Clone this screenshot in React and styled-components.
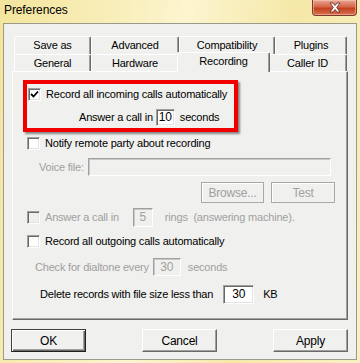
import React from "react";
import styled, { createGlobalStyle } from "styled-components";

const GlobalStyle = createGlobalStyle`
  html, body {
    margin: 0;
    padding: 0;
  }
  body {
    font-family: "Liberation Sans", Arial, sans-serif;
    font-size: 11px;
    letter-spacing: -0.2px;
    color: #000;
  }
`;

const Window = styled.div`
  width: 360px;
  height: 363px;
  box-sizing: border-box;
  padding: 0 3px 3px 3px;
  display: flex;
  flex-direction: column;
  background: linear-gradient(100deg, #f3e59c 0%, #f9efbd 30%, #fcf5cf 45%, #f5e8a8 70%, #faf1c3 100%);
`;

const TitleBar = styled.div`
  height: 23px;
  display: flex;
  align-items: flex-start;
  justify-content: space-between;
`;

const Title = styled.span`
  margin: 3px 0 0 1px;
  font-size: 12px;
  letter-spacing: -0.1px;
  color: #000;
`;

const CloseButton = styled.div`
  width: 45px;
  height: 16px;
  box-sizing: border-box;
  border: 1px solid #7a3b2c;
  border-top: none;
  border-radius: 0 0 4px 4px;
  background: linear-gradient(180deg, #e8a693 0%, #d6664a 45%, #c4401f 55%, #d7704e 100%);
  box-shadow: inset 0 0 0 1px rgba(255, 210, 190, 0.5);
  display: flex;
  align-items: center;
  justify-content: center;
`;

const Client = styled.div`
  flex: 1;
  box-sizing: border-box;
  border: 1px solid #9a9a8c;
  background: #f0f0ee;
  display: flex;
  flex-direction: column;
  padding-top: 12px;
`;

const TabRow = styled.div`
  display: flex;
  margin-left: 10px;
  height: ${(p) => p.$h}px;
`;

const Tab = styled.div`
  position: relative;
  z-index: ${(p) => (p.$selected ? 2 : 1)};
  box-sizing: border-box;
  width: ${(p) => (p.$selected ? p.$w + 4 : p.$w)}px;
  height: ${(p) => (p.$selected ? p.$h + 3 : p.$h)}px;
  margin: ${(p) => (p.$selected ? "-2px -2px 0 -2px" : "0")};
  background: #f0f0ee;
  border-top: 1px solid #fff;
  border-left: 1px solid #fff;
  border-right: 1px solid #696969;
  box-shadow: inset -1px 0 #a0a0a0;
  border-radius: 2px 2px 0 0;
  display: flex;
  justify-content: center;
  padding-top: ${(p) => (p.$selected ? 2 : 2)}px;
`;

const Panel = styled.div`
  position: relative;
  z-index: 1;
  margin-left: 8px;
  width: 336px;
  height: 249px;
  box-sizing: border-box;
  border-top: 1px solid #fff;
  border-left: 1px solid #fff;
  border-right: 1px solid #696969;
  border-bottom: 1px solid #696969;
  box-shadow: inset -1px -1px #a0a0a0;
  display: flex;
  flex-direction: column;
  padding-left: 14px;
`;

const Highlight = styled.div`
  width: 215px;
  height: 52px;
  box-sizing: border-box;
  margin: 8px 0 0 -4px;
  border: 4px solid #f20000;
  box-shadow: 2px 2px 2px rgba(0, 0, 0, 0.45);
  display: flex;
  flex-direction: column;
  padding-left: 1px;
`;

const Row = styled.div`
  display: flex;
  align-items: center;
  height: ${(p) => p.$h || 20}px;
  margin-top: ${(p) => p.$mt || 0}px;
  padding-left: ${(p) => p.$pl || 0}px;
  color: ${(p) => (p.$disabled ? "#a0a0a0" : "#000")};
`;

const Check = styled.span`
  width: 13px;
  height: 13px;
  box-sizing: border-box;
  flex: none;
  margin-right: 5px;
  border-top: 1px solid #a0a0a0;
  border-left: 1px solid #a0a0a0;
  border-right: 1px solid #fff;
  border-bottom: 1px solid #fff;
  box-shadow: inset 1px 1px #696969, inset -1px -1px #e3e3e3;
  background: ${(p) => (p.$disabled ? "#f0f0ee" : "#fff")};
  display: flex;
  align-items: center;
  justify-content: center;
`;

const Field = styled.span`
  width: ${(p) => p.$w}px;
  height: ${(p) => p.$h || 18}px;
  box-sizing: border-box;
  flex: none;
  margin: 0 ${(p) => p.$mr || 0}px 0 ${(p) => p.$ml || 0}px;
  border-top: 1px solid #a0a0a0;
  border-left: 1px solid #a0a0a0;
  border-right: 1px solid #fff;
  border-bottom: 1px solid #fff;
  box-shadow: ${(p) => (p.$disabled ? "inset 1px 1px #c8c8c8" : "inset 1px 1px #696969, inset -1px -1px #e3e3e3")};
  background: ${(p) => (p.$disabled ? "#f0f0ee" : "#fff")};
  color: ${(p) => (p.$disabled ? "#a0a0a0" : "#000")};
  display: flex;
  align-items: center;
  justify-content: center;
  font-size: 12px;
`;

const ButtonRow = styled.div`
  display: flex;
  justify-content: flex-end;
  gap: 7px;
  margin-top: 5px;
  padding-right: 12px;
`;

const SmallButton = styled.div`
  width: ${(p) => p.$w}px;
  height: 21px;
  box-sizing: border-box;
  border: 1px solid #a8a8a8;
  box-shadow: inset 1px 1px #fff;
  color: #a0a0a0;
  display: flex;
  align-items: center;
  justify-content: center;
  font-size: 12px;
`;

const Footer = styled.div`
  display: flex;
  justify-content: space-between;
  margin-top: 9px;
  padding: 0 8px 0 7px;
`;

const DialogButton = styled.div`
  width: 75px;
  height: 23px;
  box-sizing: border-box;
  border-top: 1px solid ${(p) => (p.$default ? "#404040" : "#fff")};
  border-left: 1px solid ${(p) => (p.$default ? "#404040" : "#fff")};
  border-right: 1px solid ${(p) => (p.$default ? "#202020" : "#696969")};
  border-bottom: 1px solid ${(p) => (p.$default ? "#202020" : "#696969")};
  box-shadow: ${(p) =>
    p.$default
      ? "inset 1px 1px #fff, inset -1px -1px #696969, inset -2px -2px #a0a0a0"
      : "inset -1px -1px #a0a0a0"};
  display: flex;
  align-items: center;
  justify-content: center;
  font-size: 12px;
`;

const CheckMark = () => (
  <svg width="9" height="9" viewBox="0 0 9 9">
    <path d="M1 4 L3.5 6.5 L8 1.5" fill="none" stroke="#000" strokeWidth="1.8" />
  </svg>
);

const CloseGlyph = () => (
  <svg width="14" height="11" viewBox="0 0 14 11">
    <path
      d="M2 1 L5 1 L7 3.5 L9 1 L12 1 L8.7 5.5 L12 10 L9 10 L7 7.5 L5 10 L2 10 L5.3 5.5 Z"
      fill="#fff"
      stroke="#5a2a20"
      strokeWidth="0.8"
    />
  </svg>
);

const backTabs = [
  { label: "Save as", w: 77 },
  { label: "Advanced", w: 88 },
  { label: "Compatibility", w: 96 },
  { label: "Plugins", w: 72 },
];

const frontTabs = [
  { label: "General", w: 77 },
  { label: "Hardware", w: 88 },
  { label: "Recording", w: 89, selected: true },
  { label: "Caller ID", w: 79 },
];

const App = () => (
  <Window>
    <GlobalStyle />
    <TitleBar>
      <Title>Preferences</Title>
      <CloseButton>
        <CloseGlyph />
      </CloseButton>
    </TitleBar>
    <Client>
      <TabRow $h={18}>
        {backTabs.map((t) => (
          <Tab key={t.label} $w={t.w} $h={18}>
            {t.label}
          </Tab>
        ))}
      </TabRow>
      <TabRow $h={17}>
        {frontTabs.map((t) => (
          <Tab key={t.label} $w={t.w} $h={17} $selected={t.selected}>
            {t.label}
          </Tab>
        ))}
      </TabRow>
      <Panel>
        <Highlight>
          <Row $h={20}>
            <Check>
              <CheckMark />
            </Check>
            Record all incoming calls automatically
          </Row>
          <Row $h={22} $mt={2} $pl={51}>
            Answer a call in
            <Field $w={19} $h={17} $ml={3} $mr={5}>
              10
            </Field>
            seconds
          </Row>
        </Highlight>
        <Row $mt={1}>
          <Check />
          Notify remote party about recording
        </Row>
        <Row $mt={4} $pl={12} $disabled>
          Voice file:
          <Field $w={243} $ml={4} $disabled />
        </Row>
        <ButtonRow>
          <SmallButton $w={63}>Browse...</SmallButton>
          <SmallButton $w={64}>Test</SmallButton>
        </ButtonRow>
        <Row $mt={4} $disabled>
          <Check $disabled />
          Answer a call in
          <Field $w={20} $h={19} $ml={14} $mr={12} $disabled>
            5
          </Field>
          rings&nbsp; (answering machine).
        </Row>
        <Row $mt={4}>
          <Check />
          Record all outgoing calls automatically
        </Row>
        <Row $mt={6} $pl={8} $disabled>
          Check for dialtone every
          <Field $w={28} $ml={4} $mr={7} $disabled>
            30
          </Field>
          seconds
        </Row>
        <Row $mt={7} $pl={13}>
          Delete records with file size less than
          <Field $w={31} $h={19} $ml={10} $mr={9}>
            30
          </Field>
          KB
        </Row>
      </Panel>
      <Footer>
        <DialogButton $default>OK</DialogButton>
        <DialogButton>Cancel</DialogButton>
        <DialogButton>Apply</DialogButton>
      </Footer>
    </Client>
  </Window>
);

export default App;
